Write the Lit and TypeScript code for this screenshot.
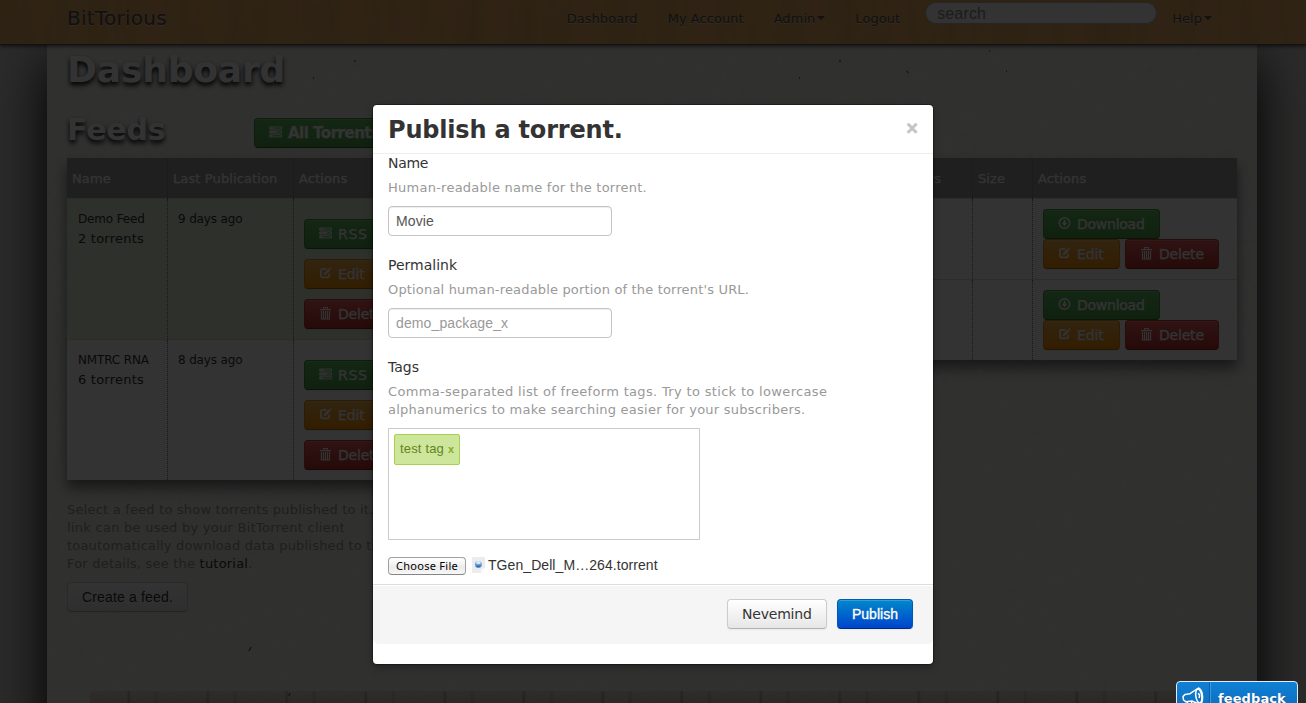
import { LitElement, html, css, svg } from "lit";
import { customElement } from "lit/decorators.js";

const glyphs = {
  list: svg`<path d="M.7 1h11.8v2.1H.7zM.7 4.9h11.8V7H.7zM.7 8.8h11.8v2.1H.7z" fill="none" stroke="currentColor" stroke-width="1"/><path d="M1 1.4h4v1.4H1zM1 5.3h7v1.4H1zM1 9.2h2.5v1.4H1z" fill="currentColor"/>`,
  edit: svg`<path d="M7.600 1.900H4Q1.900 1.900 1.900 4v4.200q0 2.100 2.100 2.100h4.200q2.100 0 2.100-2.100V6.600" fill="none" stroke="currentColor" stroke-width="1.700"/><path d="M4.600 8.300l.6-2.300L9.600 1.600l1.700 1.700L6.900 7.700zM10.400.9l.8-.8 1.600 1.600-.8.8z" fill="currentColor"/>`,
  trash: svg`<path d="M1 2.600h11M4.600 2.400V.5h3.800v1.900M2.500 4v8h8V4M4.500 4v8M6.500 4v8M8.500 4v8" fill="none" stroke="currentColor" stroke-width="1.150"/>`,
  down: svg`<circle cx="6.500" cy="6" r="5.200" fill="none" stroke="currentColor" stroke-width="1.500"/><path d="M5.600 2.800h1.800v3h2L6.500 9.200 3.600 5.800h2z" fill="currentColor"/>`,
};

const glyph = (name: keyof typeof glyphs) =>
  html`<svg class="glyph" viewBox="0 0 13 13" width="13" height="13">${glyphs[name]}</svg>`;

const btn = (kind: string, icon: keyof typeof glyphs, label: string) =>
  html`<span class="btn ${kind} w-${label.toLowerCase()}">${glyph(icon)}<span>${label}</span></span>`;

@customElement("app-root")
export class AppRoot extends LitElement {
  static styles = css`
    :host {
      display: block;
      font-family: "DejaVu Sans", Verdana, sans-serif;
      font-size: 13px;
      color: #333;
    }
    * { box-sizing: border-box; }
    h1, h2, h3, p { margin: 0; }
    .page {
      position: relative;
      height: 703px;
      overflow: hidden;
      background: #d4d4d3;
      display: flex;
      flex-direction: column;
    }
    .navbar {
      position: relative;
      z-index: 1;
      height: 44px;
      flex: none;
      padding: 0 94px 0 67px;
      display: flex;
      align-items: flex-start;
      background: #edb069;
      box-shadow: 0 1px 0 #5d5d5a, 0 2px 4px rgba(0, 0, 0, 0.7);
      color: #555;
      text-shadow: 0 1px 0 rgba(255, 255, 255, 0.5);
    }
    .grain {
      position: absolute;
      left: 0;
      top: 0;
      width: 100%;
      height: 44px;
    }
    .navbar > span, .search { position: relative; }
    .brand { font-size: 20px; line-height: 36px; letter-spacing: 0.27px; margin-right: auto; }
    .nav { line-height: 37px; letter-spacing: 0.05px; margin-right: 30px; white-space: nowrap; }
    .nav.admin { margin-right: 30px; }
    .nav.last { margin: 0; }
    .caret {
      display: inline-block;
      border: 4px solid transparent;
      border-top-color: currentColor;
      border-bottom: 0;
      vertical-align: 3px;
      margin-left: 2px;
    }
    .search {
      width: 232px;
      height: 22px;
      margin: 2px 15px 0 -5px;
      border: 1px solid #b5b9bf;
      border-radius: 11px;
      background: #fff;
      padding-left: 11px;
      font: 16px/21px "Liberation Sans", Arial, sans-serif;
      letter-spacing: 0.16px;
      color: #8c8c8c;
      text-shadow: none;
    }
    .content {
      position: relative;
      flex: none;
      width: 1210px;
      height: 800px;
      margin: 0 auto 0 47px;
      padding: 6px 20px 0;
      background: #f4f2ef;
      box-shadow: 0 18px 50px #000;
    }
    .paper {
      position: absolute;
      left: 0;
      top: 0;
      width: 100%;
      height: 100%;
    }
    h1, h2 {
      position: relative;
      font-weight: bold;
      line-height: 40px;
      color: #fff;
      text-shadow: 0 3px 5px #000;
    }
    h1 { font-size: 36px; letter-spacing: -0.15px; }
    h2 { font-size: 30px; letter-spacing: -0.15px; width: 187px; }
    .columns { position: relative; display: flex; gap: 20px; margin-top: 20px; }
    .left { width: 370px; flex: none; }
    .right { flex: 1; padding-top: 48px; }
    .heading { display: flex; height: 48px; }
    .btn {
      display: inline-flex;
      align-items: center;
      height: 30px;
      flex: none;
      border: 1px solid;
      border-radius: 4px;
      padding-left: 14px;
      font-size: 14px;
      color: #fff;
      text-shadow: 0 -1px 0 rgba(0, 0, 0, 0.25);
      box-shadow: inset 0 1px 0 rgba(255, 255, 255, 0.2), 0 1px 2px rgba(0, 0, 0, 0.05);
      white-space: nowrap;
    }
    .glyph { flex: none; margin: -1px 6px 0 0; overflow: visible; }
    .green, .orange, .red { -webkit-text-stroke: 0.3px #fff; }
    .green { background: linear-gradient(#62c462, #51a351); border-color: #458f45 #458f45 #2f6b2f; }
    .orange { background: linear-gradient(#fbb450, #f89406); border-color: #d88a20 #d88a20 #ad6704; }
    .red { background: linear-gradient(#ee5f5b, #bd362f); border-color: #b8403b #b8403b #802420; }
    .all { margin-top: 8px; width: 160px; font-weight: bold; font-size: 15px; letter-spacing: -0.5px; }
    .w-rss { width: 79px; letter-spacing: 0.7px; }
    .w-edit { width: 77px; }
    .w-delete { width: 94px; letter-spacing: -0.2px; }
    .w-download { width: 117px; letter-spacing: -0.25px; }
    .table { background: #fff; box-shadow: 0 8px 12px rgba(0, 0, 0, 0.5); }
    .row { display: grid; border-top: 1px solid #ddd; }
    .feeds .row { grid-template-columns: 100px 126px 1fr; height: 141px; }
    .torrents .row { grid-template-columns: 320px 122px 73px 60px 1fr; height: 81px; }
    .table .head { height: 40px; background: #9b9b9b; color: #fff; border-top-color: #9b9b9b; }
    .row.on { background: #dff0d8; }
    .cell { border-left: 1px dotted #777; padding: 10px 0 0 10px; line-height: 20px; font-size: 12px; letter-spacing: -0.15px; }
    .head .cell { padding: 0 0 0 5px; line-height: 40px; font-size: 13px; letter-spacing: 0.12px; -webkit-text-stroke: 0.25px #fff; }
    .cell:first-child { border-left: 0; padding-left: 11px; }
    .head .cell:first-child { padding-left: 5px; }
    .count { font-size: 13px; letter-spacing: 0.23px; }
    .cell.stack { display: flex; flex-direction: column; align-items: flex-start; gap: 10px; padding-top: 20px; }
    .cell.pack { display: flex; flex-wrap: wrap; align-content: flex-start; column-gap: 5px; padding-top: 10px; }
    .help { line-height: 18px; color: #999; letter-spacing: 0.25px; white-space: nowrap; }
    .left .help { margin: 21px 0 9px; letter-spacing: 0.2px; }
    .left .client { letter-spacing: 0.27px; }
    .help b { font-weight: normal; color: #333; }
    .btn.plain {
      background: linear-gradient(#fff, #e6e6e6);
      border-color: #ccc #ccc #b3b3b3;
      color: #333;
      text-shadow: 0 1px 1px rgba(255, 255, 255, 0.75);
    }
    .create { width: 121px; font-family: "Liberation Sans", Arial, sans-serif; letter-spacing: 0.16px; }
    .planks {
      position: absolute;
      left: 43px;
      top: 647px;
      width: 1130px;
      height: 40px;
      background:
        repeating-linear-gradient(90deg, transparent 0 37px, rgba(70, 40, 15, 0.22) 38px 39px, transparent 41px 64px, rgba(90, 60, 30, 0.12) 65px 67px, transparent 69px 79px),
        linear-gradient(rgba(180, 140, 110, 0.15), rgba(180, 140, 110, 0.4) 12px);
    }
    .backdrop {
      position: absolute;
      inset: 0;
      z-index: 2;
      background: rgba(0, 0, 0, 0.8);
    }
    .modal {
      position: absolute;
      z-index: 3;
      left: 373px;
      top: 105px;
      width: 560px;
      height: 559px;
      background: #fff;
      border-radius: 4px;
      box-shadow: 0 0 0 1px rgba(0, 0, 0, 0.3), 0 3px 7px rgba(0, 0, 0, 0.3);
    }
    .modal-head {
      display: flex;
      justify-content: space-between;
      height: 49px;
      padding: 10px 15px 0;
      border-bottom: 1px solid #eee;
    }
    h3 { font-size: 24px; line-height: 30px; letter-spacing: -0.2px; }
    .close { font: bold 20px/27px "Liberation Sans", Arial, sans-serif; color: #c4c4c4; -webkit-text-stroke: 0.5px #c4c4c4; }
    .modal-body { padding: 0 15px; height: 430px; }
    .label { font-size: 14px; line-height: 18px; }
    .label.first { letter-spacing: -0.3px; }
    .modal .help { margin: 7px 0 9px; }
    .modal .help.tight { letter-spacing: 0.17px; }
    .field {
      width: 224px;
      height: 30px;
      margin-bottom: 20px;
      padding-left: 7px;
      border: 1px solid #c4c4c4;
      border-radius: 4px;
      font: 14px/28px "Liberation Sans", Arial, sans-serif;
      letter-spacing: 0.12px;
      color: #555;
      box-shadow: inset 0 1px 1px rgba(0, 0, 0, 0.075);
    }
    .field.hint { color: #999; }
    .wide { letter-spacing: 0.33px; }
    .tags { width: 312px; height: 112px; border: 1px solid #ccc; padding: 5px; }
    .tag {
      display: flex;
      gap: 4px;
      width: 66px;
      height: 31px;
      padding-left: 5px;
      border: 1px solid #a5d24a;
      border-radius: 2px;
      background: #cde69c;
      color: #638421;
      font: 13px/28px "Liberation Sans", Arial, sans-serif;
      letter-spacing: 0.17px;
      white-space: nowrap;
    }
    .tag b { color: #82ad2b; font-size: 11px; line-height: 29px; }
    .file { display: flex; align-items: center; height: 18px; margin-top: 17px; }
    .choose {
      width: 78px;
      height: 18px;
      border: 1px solid #a0a0a0;
      border-bottom-color: #858585;
      border-radius: 4px;
      background: linear-gradient(#fff, #f0f0f0 50%, #e9e9e9 50%, #f8f8f8);
      font: 11px/16px "Noto Sans", sans-serif;
      letter-spacing: 0.27px;
      color: #000;
      text-align: center;
      white-space: nowrap;
    }
    .doc { margin: -2px 3px 0 6px; flex: none; }
    .filename { font: 14px/16px "Liberation Sans", Arial, sans-serif; letter-spacing: 0.07px; margin-top: -2px; }
    .modal-foot {
      display: flex;
      justify-content: flex-end;
      gap: 10px;
      height: 60px;
      padding: 14px 20px 0;
      border-top: 1px solid #ddd;
      border-radius: 0 0 6px 6px;
      background: #f5f5f5;
      box-shadow: inset 0 1px 0 #fff;
    }
    .cancel { width: 100px; letter-spacing: -0.2px; }
    .primary {
      width: 76px;
      font-family: "Liberation Sans", Arial, sans-serif;
      background: linear-gradient(#0088cc, #0044cc);
      border-color: #0058b8 #0058b8 #002a80;
      -webkit-text-stroke: 0.35px #fff;
    }
    .feedback {
      position: absolute;
      z-index: 4;
      left: 1176px;
      top: 681px;
      width: 122px;
      height: 40px;
      display: flex;
      border: 1px solid #e4edf5;
      border-radius: 4px;
      background: linear-gradient(#0f80d6, #0e66b0);
      color: #fff;
    }
    .horn { width: 33px; border-right: 1px solid #0a5ea6; padding: 5px 0 0 5px; box-shadow: 1px 0 0 #3c97dd; }
    .feedback b { font-size: 13px; line-height: 34px; letter-spacing: 0.1px; padding-left: 8px; text-shadow: 0 1px 1px rgba(0, 0, 0, 0.4); }
  `;

  private feed(name: string, count: string, when: string, on: boolean) {
    return html`<div class="row ${on ? "on" : ""}">
      <div class="cell">${name}<div class="count">${count}</div></div>
      <div class="cell">${when}</div>
      <div class="cell stack">${btn("green", "list", "RSS")}${btn("orange", "edit", "Edit")}${btn("red", "trash", "Delete")}</div>
    </div>`;
  }

  private torrent() {
    return html`<div class="row">
      <div class="cell"></div><div class="cell"></div><div class="cell"></div><div class="cell"></div>
      <div class="cell pack">${btn("green", "down", "Download")}${btn("orange", "edit", "Edit")}${btn("red", "trash", "Delete")}</div>
    </div>`;
  }

  render() {
    return html`
      <div class="page">
        <div class="navbar">
          <svg class="grain">
            <filter id="wood" x="0" y="0" width="100%" height="100%">
              <feTurbulence type="fractalNoise" baseFrequency="0.035 0.004" numOctaves="4" seed="7"/>
              <feColorMatrix values="0 0 0 0 0.6  0 0 0 0 0.32  0 0 0 0 0.08  1.1 0 0 0 -0.42"/>
            </filter>
            <rect width="100%" height="44" filter="url(#wood)"/>
          </svg>
          <span class="brand">BitTorious</span>
          <span class="nav">Dashboard</span>
          <span class="nav">My Account</span>
          <span class="nav admin">Admin<i class="caret"></i></span>
          <span class="nav">Logout</span>
          <div class="search">search</div>
          <span class="nav last">Help<i class="caret"></i></span>
        </div>
        <div class="content">
          <svg class="paper">
            <filter id="fibre" x="0" y="0" width="100%" height="100%">
              <feTurbulence type="fractalNoise" baseFrequency="0.16" numOctaves="3" seed="3"/>
              <feColorMatrix values="0 0 0 0 0.4  0 0 0 0 0.36  0 0 0 0 0.3  0.13 0 0 0 -0.03"/>
            </filter>
            <rect width="100%" height="100%" filter="url(#fibre)"/>
            <path d="M308 16v2M793 16v2M860 27l1 2M752 34h1M942 7h1M266 34h1M959 27h1M204 603l-2 4M243 649l-1 3" stroke="#555" stroke-width="1.300"/>
          </svg>
          <h1>Dashboard</h1>
          <div class="columns">
            <div class="left">
              <div class="heading">
                <h2>Feeds</h2>
                <span class="btn green all">${glyph("list")}<span>All Torrents</span></span>
              </div>
              <div class="table feeds">
                <div class="row head"><div class="cell">Name</div><div class="cell">Last Publication</div><div class="cell">Actions</div></div>
                ${this.feed("Demo Feed", "2 torrents", "9 days ago", true)}
                ${this.feed("NMTRC RNA", "6 torrents", "8 days ago", false)}
              </div>
              <p class="help">Select a feed to show torrents published to it.<br><span class="client">link can be used by your BitTorrent client</span><br>toautomatically download data published to the<br>For details, see the <b>tutorial</b>.</p>
              <span class="btn plain create">Create a feed.</span>
            </div>
            <div class="right">
              <div class="table torrents">
                <div class="row head"><div class="cell"></div><div class="cell"></div><div class="cell">Peers</div><div class="cell">Size</div><div class="cell">Actions</div></div>
                ${this.torrent()}${this.torrent()}
              </div>
            </div>
          </div>
          <div class="planks"></div>
        </div>
        <div class="backdrop"></div>
        <div class="modal">
          <div class="modal-head"><h3>Publish a torrent.</h3><span class="close">×</span></div>
          <div class="modal-body">
            <div class="label first">Name</div>
            <p class="help">Human-readable name for the torrent.</p>
            <div class="field">Movie</div>
            <div class="label">Permalink</div>
            <p class="help tight">Optional human-readable portion of the torrent's URL.</p>
            <div class="field hint">demo_package_x</div>
            <div class="label">Tags</div>
            <p class="help"><span class="wide">Comma-separated list of freeform tags. Try to stick to lowercase</span><br>alphanumerics to make searching easier for your subscribers.</p>
            <div class="tags"><div class="tag">test tag<b>x</b></div></div>
            <div class="file">
              <span class="choose">Choose File</span>
              <svg class="doc" width="13" height="16" viewBox="0 0 13 16">
                <path d="M0 0h13v11l-4 5H0z" fill="#ececec"/><path d="M13 11l-4 5v-4z" fill="#fafafa"/>
                <circle cx="6.400" cy="7.400" r="3.500" fill="#6da3de"/><ellipse cx="6.400" cy="5.600" rx="2.400" ry="1.500" fill="#dcebfa"/><path d="M3.400 8.600a3.400 3.400 0 0 0 6 0z" fill="#3566a8"/>
              </svg>
              <span class="filename">TGen_Dell_M…264.torrent</span>
            </div>
          </div>
          <div class="modal-foot">
            <span class="btn plain cancel">Nevemind</span>
            <span class="btn primary">Publish</span>
          </div>
        </div>
        <div class="feedback">
          <div class="horn">
            <svg width="23" height="22" viewBox="0 0 23 22" fill="none" stroke="#fff" stroke-width="1.500" stroke-linejoin="round">
              <path d="M1 9.500l2-2 5-.8L16.500 1q3.500 1.500 4 8t-2.500 8.500L10 14l-6 .8-2.500-1.800z"/>
              <ellipse cx="16.800" cy="9" rx="3" ry="7" transform="rotate(-8 16.800 9)"/>
              <path d="M16 6.500q2.500 1 1 4.500M5 15l2 5h3.500L9.500 14.500"/>
            </svg>
          </div>
          <b>feedback</b>
        </div>
      </div>`;
  }
}
